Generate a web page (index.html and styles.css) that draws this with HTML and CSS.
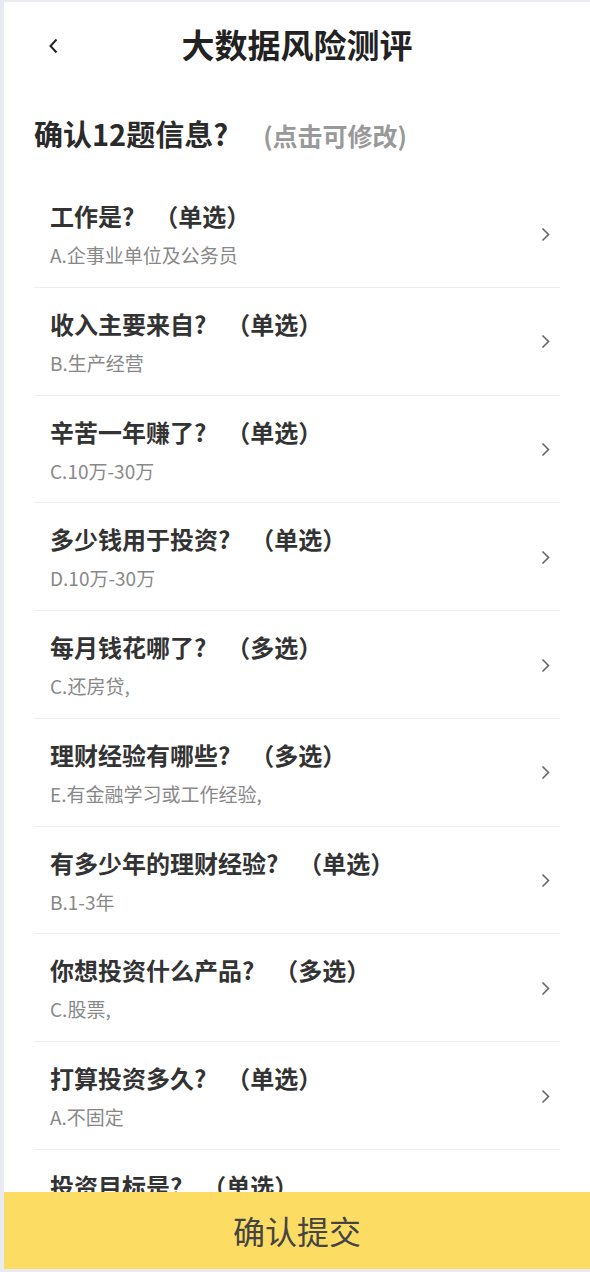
FILE: index.html
```html
<!DOCTYPE html>
<html lang="zh-CN">
<head>
    <meta charset="UTF-8">
    <meta name="viewport" content="width=device-width, initial-scale=1.0">
    <title>大数据风险测评</title>
    <link rel="stylesheet" href="styles.css">
</head>
<body>
    <div class="page">
        <div class="header">
            <span class="back">
                <svg width="10" height="16" viewBox="0 0 10 16"><path d="M8.5 1.5 L2.5 8 L8.5 14.5" fill="none" stroke="#222" stroke-width="2"/></svg>
            </span>
            <h1 class="title">大数据风险测评</h1>
            <span></span>
        </div>

        <div class="confirm">确认12题信息?<span class="tip">(点击可修改)</span></div>

        <ul class="list">
            <li>
                <div class="info">
                    <p class="q">工作是?<span class="type">（单选）</span></p>
                    <p class="a">A.企事业单位及公务员</p>
                </div>
                <svg class="arrow" width="9" height="15" viewBox="0 0 9 15"><path d="M1.5 1.5 L7.5 7.5 L1.5 13.5" fill="none" stroke="#666" stroke-width="1.6"/></svg>
            </li>
            <li>
                <div class="info">
                    <p class="q">收入主要来自?<span class="type">（单选）</span></p>
                    <p class="a">B.生产经营</p>
                </div>
                <svg class="arrow" width="9" height="15" viewBox="0 0 9 15"><path d="M1.5 1.5 L7.5 7.5 L1.5 13.5" fill="none" stroke="#666" stroke-width="1.6"/></svg>
            </li>
            <li>
                <div class="info">
                    <p class="q">辛苦一年赚了?<span class="type">（单选）</span></p>
                    <p class="a">C.10万-30万</p>
                </div>
                <svg class="arrow" width="9" height="15" viewBox="0 0 9 15"><path d="M1.5 1.5 L7.5 7.5 L1.5 13.5" fill="none" stroke="#666" stroke-width="1.6"/></svg>
            </li>
            <li>
                <div class="info">
                    <p class="q">多少钱用于投资?<span class="type">（单选）</span></p>
                    <p class="a">D.10万-30万</p>
                </div>
                <svg class="arrow" width="9" height="15" viewBox="0 0 9 15"><path d="M1.5 1.5 L7.5 7.5 L1.5 13.5" fill="none" stroke="#666" stroke-width="1.6"/></svg>
            </li>
            <li>
                <div class="info">
                    <p class="q">每月钱花哪了?<span class="type">（多选）</span></p>
                    <p class="a">C.还房贷,</p>
                </div>
                <svg class="arrow" width="9" height="15" viewBox="0 0 9 15"><path d="M1.5 1.5 L7.5 7.5 L1.5 13.5" fill="none" stroke="#666" stroke-width="1.6"/></svg>
            </li>
            <li>
                <div class="info">
                    <p class="q">理财经验有哪些?<span class="type">（多选）</span></p>
                    <p class="a">E.有金融学习或工作经验,</p>
                </div>
                <svg class="arrow" width="9" height="15" viewBox="0 0 9 15"><path d="M1.5 1.5 L7.5 7.5 L1.5 13.5" fill="none" stroke="#666" stroke-width="1.6"/></svg>
            </li>
            <li>
                <div class="info">
                    <p class="q">有多少年的理财经验?<span class="type">（单选）</span></p>
                    <p class="a">B.1-3年</p>
                </div>
                <svg class="arrow" width="9" height="15" viewBox="0 0 9 15"><path d="M1.5 1.5 L7.5 7.5 L1.5 13.5" fill="none" stroke="#666" stroke-width="1.6"/></svg>
            </li>
            <li>
                <div class="info">
                    <p class="q">你想投资什么产品?<span class="type">（多选）</span></p>
                    <p class="a">C.股票,</p>
                </div>
                <svg class="arrow" width="9" height="15" viewBox="0 0 9 15"><path d="M1.5 1.5 L7.5 7.5 L1.5 13.5" fill="none" stroke="#666" stroke-width="1.6"/></svg>
            </li>
            <li>
                <div class="info">
                    <p class="q">打算投资多久?<span class="type">（单选）</span></p>
                    <p class="a">A.不固定</p>
                </div>
                <svg class="arrow" width="9" height="15" viewBox="0 0 9 15"><path d="M1.5 1.5 L7.5 7.5 L1.5 13.5" fill="none" stroke="#666" stroke-width="1.6"/></svg>
            </li>
            <li>
                <div class="info">
                    <p class="q">投资目标是?<span class="type">（单选）</span></p>
                    <p class="a">B.稳健增值</p>
                </div>
                <svg class="arrow" width="9" height="15" viewBox="0 0 9 15"><path d="M1.5 1.5 L7.5 7.5 L1.5 13.5" fill="none" stroke="#666" stroke-width="1.6"/></svg>
            </li>
        </ul>

        <div class="submit">确认提交</div>
    </div>
</body>
</html>
```

FILE: styles.css
```css
* {
    margin: 0;
    padding: 0;
    box-sizing: border-box;
}
body {
    background-color: #e8ecf1;
    font-family: "Noto Sans CJK SC", "Noto Sans", sans-serif;
}
.page {
    position: relative;
    margin: 2px 0 0 4px;
    height: 1267px;
    background-color: #fff;
    overflow: hidden;
}
.header {
    display: grid;
    grid-template-columns: 1fr auto 1fr;
    align-items: center;
    height: 83px;
}
.back {
    display: flex;
    padding-left: 44px;
    padding-top: 4px;
}
.title {
    font-size: 33px;
    font-weight: bold;
    color: #222;
    line-height: 40px;
}
.confirm {
    margin: 28px 0 25px;
    padding-left: 30px;
    font-size: 29px;
    font-weight: bold;
    color: #2a2a2a;
    line-height: 40px;
}
.tip {
    margin-left: 35px;
    font-size: 25px;
    color: #999;
}
.list {
    list-style: none;
    margin: 0 30px;
}
.list li {
    display: flex;
    align-items: center;
    justify-content: space-between;
    padding: 21px 10px 19.75px 16px;
    border-bottom: 1px solid #eeeeee;
}
.q {
    font-size: 24px;
    font-weight: bold;
    color: #333;
    line-height: 30px;
}
.type {
    margin-left: 20px;
}
.a {
    margin-top: 12px;
    font-size: 19px;
    color: #888;
    line-height: 24px;
}
.submit {
    position: absolute;
    left: 0;
    right: 0;
    bottom: 0;
    height: 77px;
    background-color: #fddc64;
    color: #444;
    font-size: 32px;
    line-height: 77px;
    text-align: center;
}
```
